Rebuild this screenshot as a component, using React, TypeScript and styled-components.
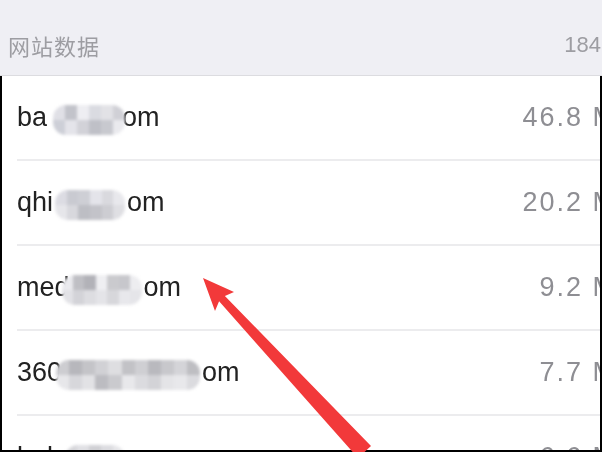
import React from 'react';
import styled, { createGlobalStyle } from 'styled-components';

const GlobalStyle = createGlobalStyle`
  html, body {
    margin: 0;
    padding: 0;
    background: #ffffff;
  }

  body {
    width: 602px;
    height: 452px;
    overflow: hidden;
    font-family: "Liberation Sans", "Noto Sans CJK SC", sans-serif;
  }
`;

const Screen = styled.div`
  position: relative;
  width: 602px;
  height: 452px;
  overflow: hidden;
  display: flex;
  flex-direction: column;
  background: #ffffff;
`;

const SectionHeader = styled.div`
  height: 76px;
  flex-shrink: 0;
  box-sizing: border-box;
  display: flex;
  align-items: center;
  justify-content: space-between;
  padding: 14px 0 0 8px;
  background: #efeff4;
  border-bottom: 1px solid #dcdce0;
  color: #9d9da2;
  font-size: 22px;
  overflow: hidden;
`;

const HeaderTitle = styled.span`
  font-family: "Noto Sans CJK SC", "Liberation Sans", sans-serif;
  letter-spacing: 1px;
  filter: blur(0.5px);
`;

const HeaderTotal = styled.span`
  white-space: nowrap;
  margin-right: -38px;
  filter: blur(0.5px);
`;

const List = styled.div`
  flex: 1;
  border: 2px solid #000000;
  border-top: none;
  overflow: hidden;
`;

const Row = styled.div`
  height: 85px;
  box-sizing: border-box;
  margin-left: 15px;
  display: flex;
  align-items: center;
  justify-content: space-between;
  border-bottom: 2px solid #ececee;
`;

const Domain = styled.span`
  display: flex;
  align-items: center;
  font-size: 27px;
  color: #222222;
  white-space: nowrap;
  filter: blur(0.35px);
`;

const Mosaic = styled.span<{ $w: number; $before: number; $after: number }>`
  position: relative;
  z-index: 1;
  display: inline-grid;
  grid-template-rows: repeat(2, 1fr);
  grid-auto-flow: column;
  grid-auto-columns: 1fr;
  width: ${p => p.$w}px;
  height: 30px;
  margin-left: ${p => p.$before}px;
  margin-right: ${p => p.$after}px;
  margin-top: 4px;
  border-radius: 13px;
  overflow: hidden;
  filter: blur(1.4px);
`;

const Cell = styled.span<{ $c: string }>`
  background: ${p => p.$c};
`;

const Size = styled.span`
  font-size: 27px;
  letter-spacing: 2px;
  color: #8e8e93;
  white-space: nowrap;
  margin-right: -37px;
  filter: blur(0.4px);
`;

const ArrowLayer = styled.svg`
  position: absolute;
  left: 0;
  top: 0;
  width: 602px;
  height: 452px;
  pointer-events: none;
  filter: blur(0.5px);
`;

type Site = {
  head: string;
  tail: string;
  mosaic: { w: number; before: number; after: number; shades: string[] };
  size: string;
};

const sites: Site[] = [
  {
    head: 'ba',
    tail: 'om',
    mosaic: {
      w: 72,
      before: 6,
      after: -3,
      shades: ['#e0e0e6', '#cdcfd7', '#c2c3ca', '#e4e4ea', '#eeeef2', '#d2d2d8', '#dadbe1', '#bfc0c7', '#e2e2e6', '#c8c9cf', '#d0d0d6', '#eaeaee'],
    },
    size: '46.8 MB',
  },
  {
    head: 'qhi',
    tail: 'om',
    mosaic: {
      w: 70,
      before: 2,
      after: 2,
      shades: ['#dcdce3', '#e6e6ea', '#c9cad1', '#d8d8dd', '#cecfd5', '#bdbec4', '#e4e4ea', '#c3c3c9', '#d9d9de', '#cdcdd2', '#e8e8ec', '#dfdfe3'],
    },
    size: '20.2 MB',
  },
  {
    head: 'med',
    tail: 'om',
    mosaic: {
      w: 80,
      before: -8,
      after: 2,
      shades: ['#eaeaee', '#e2e2e6', '#bfbfc4', '#d3d3d8', '#b2b2b8', '#dddde1', '#efeff2', '#e4e4e8', '#cacace', '#d7d7db', '#c7c7cc', '#e8e8ec', '#ededf0', '#e5e5e9'],
    },
    size: '9.2 MB',
  },
  {
    head: '360',
    tail: 'om',
    mosaic: {
      w: 144,
      before: -6,
      after: 2,
      shades: ['#cdcdd1', '#e7e7ea', '#b7b7bc', '#d7d7db', '#c4c4c8', '#e2e2e5', '#d1d1d5', '#bcbcc1', '#dedee1', '#cacace', '#c2c2c6', '#e8e8eb', '#cfcfd3', '#dbdbdf', '#b9b9be', '#d3d3d7', '#c8c8cc', '#e4e4e7', '#d4d4d8', '#e8e8eb', '#bebec2', '#dbdbdf'],
    },
    size: '7.7 MB',
  },
  {
    head: 'bal',
    tail: 'om',
    mosaic: {
      w: 60,
      before: 12,
      after: 0,
      shades: ['#d6d6da', '#e8e8eb', '#e0e0e4', '#eeeef1', '#d0d0d4', '#eaeaed', '#dcdce0', '#ececef', '#e6e6e9', '#f0f0f2'],
    },
    size: '6.6 MB',
  },
];

const App: React.FC = () => {
  return (
    <>
      <GlobalStyle />
      <Screen>
        <SectionHeader>
          <HeaderTitle>网站数据</HeaderTitle>
          <HeaderTotal>184 MB</HeaderTotal>
        </SectionHeader>

        <List>
          {sites.map((site) => (
            <Row key={site.head}>
              <Domain>
                {site.head}
                <Mosaic $w={site.mosaic.w} $before={site.mosaic.before} $after={site.mosaic.after}>
                  {site.mosaic.shades.map((shade, i) => (
                    <Cell key={i} $c={shade} />
                  ))}
                </Mosaic>
                {site.tail}
              </Domain>
              <Size>{site.size}</Size>
            </Row>
          ))}
        </List>

        {/* red annotation arrow drawn over the list */}
        <ArrowLayer viewBox="0 0 602 452">
          <polygon
            points="203,278 234,292 224.9,295.9 371,446 358,458 219.1,301.3 215,311"
            fill="#f2393a"
          />
        </ArrowLayer>
      </Screen>
    </>
  );
};

export default App;
